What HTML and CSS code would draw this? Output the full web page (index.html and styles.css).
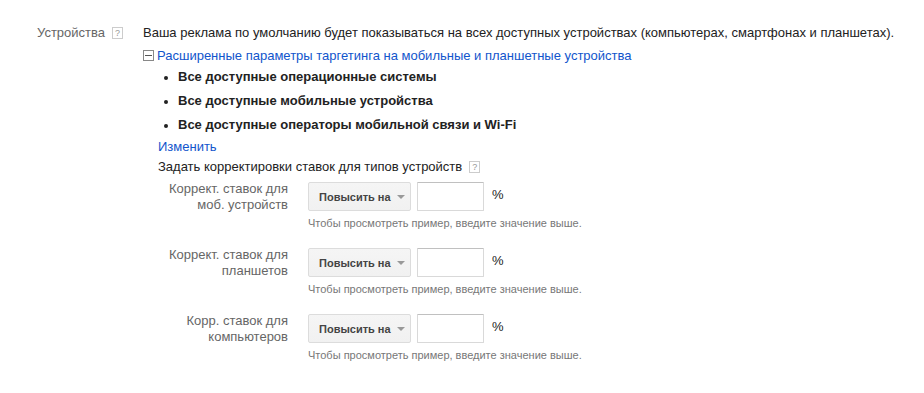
FILE: index.html
```html
<!DOCTYPE html>
<html lang="ru">
<head>
<meta charset="utf-8">
<link rel="stylesheet" href="styles.css">
</head>
<body>
<div class="section">
  <div class="label-col">
    <span class="section-title">Устройства</span><span class="help">?</span>
  </div>
  <div class="content">
    <p class="intro">Ваша реклама по умолчанию будет показываться на всех доступных устройствах (компьютерах, смартфонах и планшетах).</p>
    <div class="toggle-line"><span class="minus"></span><a class="link" href="#">Расширенные параметры таргетинга на мобильные и планшетные устройства</a></div>
    <div class="advanced">
      <ul class="bullets">
        <li>Все доступные операционные системы</li>
        <li>Все доступные мобильные устройства</li>
        <li>Все доступные операторы мобильной связи и Wi-Fi</li>
      </ul>
      <div class="edit-line"><a class="link" href="#">Изменить</a></div>
      <div class="adj-title">Задать корректировки ставок для типов устройств<span class="help">?</span></div>
      <div class="rows">
        <div class="row">
          <div class="row-label">Коррект. ставок для<br>моб. устройств</div>
          <div class="row-body">
            <div class="controls">
              <button class="btn">Повысить на<span class="caret"></span></button>
              <input class="num" type="text">
              <span class="pct">%</span>
            </div>
            <div class="hint">Чтобы просмотреть пример, введите значение выше.</div>
          </div>
        </div>
        <div class="row">
          <div class="row-label">Коррект. ставок для<br>планшетов</div>
          <div class="row-body">
            <div class="controls">
              <button class="btn">Повысить на<span class="caret"></span></button>
              <input class="num" type="text">
              <span class="pct">%</span>
            </div>
            <div class="hint">Чтобы просмотреть пример, введите значение выше.</div>
          </div>
        </div>
        <div class="row">
          <div class="row-label">Корр. ставок для<br>компьютеров</div>
          <div class="row-body">
            <div class="controls">
              <button class="btn">Повысить на<span class="caret"></span></button>
              <input class="num" type="text">
              <span class="pct">%</span>
            </div>
            <div class="hint">Чтобы просмотреть пример, введите значение выше.</div>
          </div>
        </div>
      </div>
    </div>
  </div>
</div>
</body>
</html>
```
FILE: styles.css
```css
html, body {
  margin: 0;
  padding: 0;
  background: #fff;
}
body {
  font-family: "Liberation Sans", Arial, sans-serif;
  font-size: 13px;
  color: #222;
}
.section {
  display: flex;
  padding: 22px 0 0 37px;
}
.label-col {
  width: 106px;
  line-height: 22px;
  display: flex;
  align-items: center;
  height: 22px;
}
.section-title {
  color: #666;
}
.help {
  display: inline-flex;
  align-items: center;
  justify-content: center;
  width: 9px;
  height: 10px;
  border: 1px solid #ccc;
  color: #999;
  font-size: 9px;
  line-height: 10px;
  margin-left: 7px;
  font-weight: normal;
  vertical-align: middle;
}
.content {
  flex: 1;
}
.intro {
  margin: 0;
  line-height: 22px;
  white-space: nowrap;
}
.toggle-line {
  display: flex;
  align-items: center;
  height: 22px;
}
.minus {
  position: relative;
  box-sizing: border-box;
  width: 11px;
  height: 11px;
  border: 1px solid #888;
  margin-right: 3px;
}
.minus::after {
  content: "";
  position: absolute;
  left: 1px;
  right: 1px;
  top: 4px;
  height: 1px;
  background: #555;
}
.link {
  color: #15c;
  text-decoration: none;
}
.advanced {
  padding-left: 15px;
}
.bullets {
  list-style: none;
  margin: -1px 0 0 0;
  padding: 0 0 0 20px;
}
.bullets li {
  position: relative;
  line-height: 24px;
  font-weight: bold;
}
.bullets li::before {
  content: "";
  position: absolute;
  left: -14px;
  top: 11px;
  width: 4px;
  height: 4px;
  border-radius: 50%;
  background: #222;
}
.edit-line {
  line-height: 20px;
}
.adj-title {
  line-height: 20px;
  display: flex;
  align-items: center;
}
.rows {
  padding-top: 5px;
}
.row {
  display: flex;
  gap: 20px;
  margin-bottom: 18px;
}
.row-label {
  width: 130px;
  text-align: right;
  color: #666;
  line-height: 16px;
  margin-top: -1px;
}
.controls {
  display: flex;
  align-items: center;
}
.btn {
  box-sizing: border-box;
  display: inline-flex;
  align-items: center;
  height: 29px;
  width: 103px;
  padding: 0 0 0 10px;
  margin: 0;
  border: 1px solid #dcdcdc;
  border-radius: 2px;
  background: linear-gradient(#f5f5f5, #f1f1f1);
  font-family: "Liberation Sans", Arial, sans-serif;
  font-size: 11px;
  font-weight: bold;
  color: #444;
}
.caret {
  width: 0;
  height: 0;
  border-left: 4px solid transparent;
  border-right: 4px solid transparent;
  border-top: 4px solid #999;
  margin-left: 6px;
}
.num {
  box-sizing: border-box;
  width: 67px;
  height: 29px;
  margin: 0 0 0 6px;
  padding: 0 4px;
  border: 1px solid #d9d9d9;
  border-top-color: #c0c0c0;
  border-radius: 1px;
  background: #fff;
  font-family: "Liberation Sans", Arial, sans-serif;
  font-size: 13px;
}
.pct {
  margin-left: 8px;
  margin-top: -4px;
}
.hint {
  margin-top: 5px;
  font-size: 11px;
  line-height: 14px;
  color: #777;
}
```
